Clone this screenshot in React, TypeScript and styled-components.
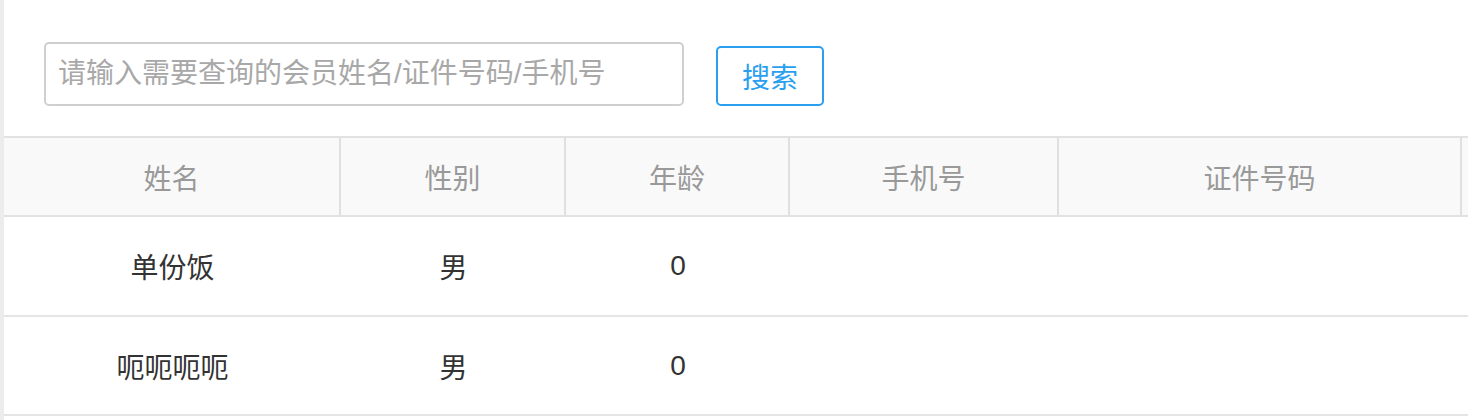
import React from "react";
import styled, { createGlobalStyle } from "styled-components";

const GlobalStyle = createGlobalStyle`
  html, body { margin: 0; padding: 0; background: #fff; }
  body {
    font-family: "Liberation Sans", "Noto Sans CJK SC", sans-serif;
    overflow: hidden;
  }
`;

const Page = styled.div`
  width: 1468px;
  height: 420px;
  border-left: 4px solid #ececec;
  box-sizing: border-box;
  overflow: hidden;
  background: #fff;
`;

const Toolbar = styled.div`
  display: flex;
  align-items: flex-end;
  gap: 32px;
  padding: 42px 0 30px 40px;
`;

const SearchInput = styled.input`
  box-sizing: border-box;
  width: 640px;
  height: 64px;
  border: 2px solid #cfcfcf;
  border-radius: 5px;
  padding: 0 12px;
  font-family: "Liberation Sans", "Noto Sans CJK SC", sans-serif;
  font-size: 28px;
  color: #333;
  outline: none;
  &::placeholder { color: #a8a8a8; }
`;

const SearchButton = styled.button`
  box-sizing: border-box;
  width: 108px;
  height: 60px;
  border: 2px solid #2a9ff0;
  border-radius: 5px;
  background: #fff;
  color: #2a9ff0;
  font-family: "Noto Sans CJK SC", sans-serif;
  font-size: 28px;
  padding: 0;
  cursor: pointer;
`;

const Table = styled.div`
  display: grid;
  grid-template-columns: 337px 225px 224px 269px 403px 200px;
  border-top: 2px solid #e2e2e2;
  width: max-content;
`;

const HeadCell = styled.div<{ $last?: boolean }>`
  box-sizing: border-box;
  height: 79px;
  background: #f9f9f9;
  border-bottom: 2px solid #e2e2e2;
  border-right: ${(p) => (p.$last ? "none" : "2px solid #e0e0e0")};
  display: flex;
  align-items: center;
  justify-content: center;
  color: #999;
  font-size: 28px;
  font-family: "Noto Sans CJK SC", sans-serif;
`;

const BodyCell = styled.div<{ $h: number }>`
  box-sizing: border-box;
  height: ${(p) => p.$h}px;
  border-bottom: 2px solid #e4e6e6;
  display: flex;
  align-items: center;
  justify-content: center;
  color: #333;
  font-size: 28px;
  font-family: "Liberation Sans", "Noto Sans CJK SC", sans-serif;
`;

const headers = ["姓名", "性别", "年龄", "手机号", "证件号码", ""];
const rows = [
  ["单份饭", "男", "0", "", "", ""],
  ["呃呃呃呃", "男", "0", "", "", ""],
];

export default function App() {
  return (
    <>
      <GlobalStyle />
      <Page>
        <Toolbar>
          <SearchInput placeholder="请输入需要查询的会员姓名/证件号码/手机号" />
          <SearchButton>搜索</SearchButton>
        </Toolbar>
        <Table>
          {headers.map((h, i) => (
            <HeadCell key={i} $last={i === headers.length - 1}>
              {h}
            </HeadCell>
          ))}
          {rows.map((r, ri) =>
            r.map((c, ci) => (
              <BodyCell key={`${ri}-${ci}`} $h={ri === 0 ? 100 : 99}>
                {c}
              </BodyCell>
            ))
          )}
        </Table>
      </Page>
    </>
  );
}
